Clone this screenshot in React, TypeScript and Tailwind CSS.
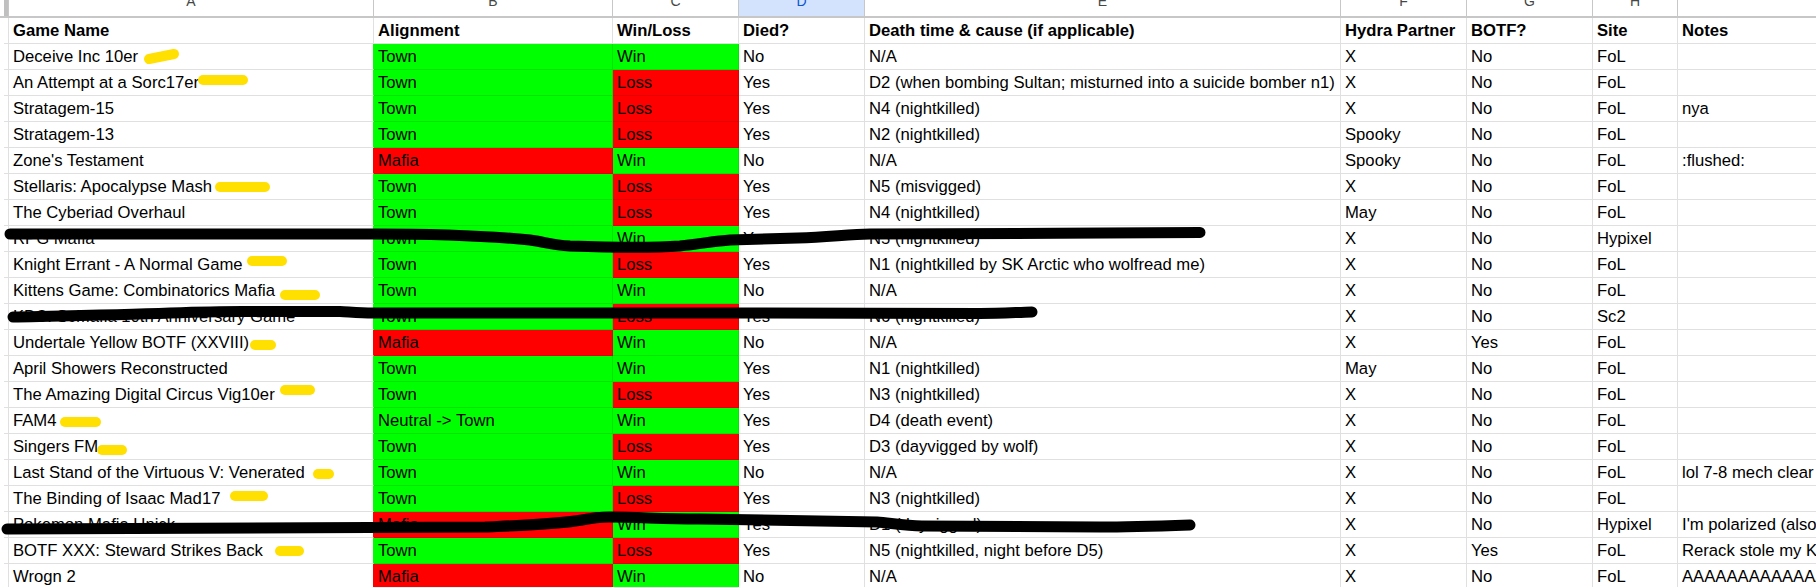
const COLS = ["A", "B", "C", "D", "E", "F", "G", "H", ""];

const HEAD = ["Game Name", "Alignment", "Win/Loss", "Died?", "Death time & cause (if applicable)", "Hydra Partner", "BOTF?", "Site", "Notes"];

const ROWS: string[][] = [
  ["Deceive Inc 10er", "Town", "Win", "No", "N/A", "X", "No", "FoL", ""],
  ["An Attempt at a Sorc17er", "Town", "Loss", "Yes", "D2 (when bombing Sultan; misturned into a suicide bomber n1)", "X", "No", "FoL", ""],
  ["Stratagem-15", "Town", "Loss", "Yes", "N4 (nightkilled)", "X", "No", "FoL", "nya"],
  ["Stratagem-13", "Town", "Loss", "Yes", "N2 (nightkilled)", "Spooky", "No", "FoL", ""],
  ["Zone's Testament", "Mafia", "Win", "No", "N/A", "Spooky", "No", "FoL", ":flushed:"],
  ["Stellaris: Apocalypse Mash", "Town", "Loss", "Yes", "N5 (misvigged)", "X", "No", "FoL", ""],
  ["The Cyberiad Overhaul", "Town", "Loss", "Yes", "N4 (nightkilled)", "May", "No", "FoL", ""],
  ["RPG Mafia", "Town", "Win", "Yes", "N5 (nightkilled)", "X", "No", "Hypixel", ""],
  ["Knight Errant - A Normal Game", "Town", "Loss", "Yes", "N1 (nightkilled by SK Arctic who wolfread me)", "X", "No", "FoL", ""],
  ["Kittens Game: Combinatorics Mafia", "Town", "Win", "No", "N/A", "X", "No", "FoL", ""],
  ["KBC: ScMafia 10th Anniversary Game", "Town", "Loss", "Yes", "N6 (nightkilled)", "X", "No", "Sc2", ""],
  ["Undertale Yellow BOTF (XXVIII)", "Mafia", "Win", "No", "N/A", "X", "Yes", "FoL", ""],
  ["April Showers Reconstructed", "Town", "Win", "Yes", "N1 (nightkilled)", "May", "No", "FoL", ""],
  ["The Amazing Digital Circus Vig10er", "Town", "Loss", "Yes", "N3 (nightkilled)", "X", "No", "FoL", ""],
  ["FAM4", "Neutral -> Town", "Win", "Yes", "D4 (death event)", "X", "No", "FoL", ""],
  ["Singers FM", "Town", "Loss", "Yes", "D3 (dayvigged by wolf)", "X", "No", "FoL", ""],
  ["Last Stand of the Virtuous V: Venerated", "Town", "Win", "No", "N/A", "X", "No", "FoL", "lol 7-8 mech clear"],
  ["The Binding of Isaac Mad17", "Town", "Loss", "Yes", "N3 (nightkilled)", "X", "No", "FoL", ""],
  ["Pokemon Mafia Unick", "Mafia", "Win", "Yes", "D1 (dayvigged)", "X", "No", "Hypixel", "I'm polarized (also known as a very long note)"],
  ["BOTF XXX: Steward Strikes Back", "Town", "Loss", "Yes", "N5 (nightkilled, night before D5)", "X", "Yes", "FoL", "Rerack stole my Kill and everything else too"],
  ["Wrogn 2", "Mafia", "Win", "No", "N/A", "X", "No", "FoL", "AAAAAAAAAAAAAAAAAAAAAAAAAAAAAAAA"],
];

const YELLOW: [number, number, number, number][] = [
  [149, 59, 174, 54],
  [203, 80, 243, 80],
  [220, 187, 265, 187],
  [252, 261, 282, 261],
  [285, 295, 315, 295],
  [255, 345, 271, 345],
  [285, 390, 310, 390],
  [65, 422, 96, 422],
  [102, 450, 122, 450],
  [318, 474, 329, 474],
  [235, 496, 263, 496],
  [280, 551, 299, 551],
];

const BLACK = [
  "M10 234 L373 234 C420 234 480 235 530 240 C545 242 552 245 570 246 C600 247 650 248 680 246 C700 244 715 241 730 240 L798 238 C830 237 850 234 870 234 C950 234 1100 233 1200 232.5",
  "M13 317 C60 316 120 315 170 313 C200 312 220 311.5 242 311.5 L340 311.5 C350 312 360 313 373 313 L760 313 L980 313.5 C1000 313.5 1015 312.5 1032 312",
  "M7 529 L485 527 C530 525 560 524 582 520 C592 518 600 517 609 517 C640 517 660 519 699 519 L877 522 C890 523 905 526 922 526 L1100 527 C1130 527 1160 526 1190 525",
];

function colorOf(value: string): string {
  if (value === "Town" || value === "Win" || value === "Neutral -> Town") return "bg-[#00ff00] border-black/10";
  if (value === "Mafia" || value === "Loss") return "bg-[#ff0000] border-black/10";
  return "border-[#e0e0e0]";
}

function Cell({ text, className = "" }: { text: string; className?: string }) {
  return (
    <div className={`flex items-end overflow-hidden whitespace-nowrap border-r border-b pl-1 pb-[3px] text-[16.67px] leading-[18px] text-black ${className}`}>
      {text}
    </div>
  );
}

export default function App() {
  return (
    <div className="relative h-[587px] w-[1816px] overflow-hidden bg-white font-['Liberation_Sans',Arial,sans-serif]">
      <div className="grid grid-cols-[9px_365px_239px_126px_126px_476px_126px_126px_85px_138px] grid-rows-[18px] auto-rows-[26px]">
        <div className="border-r border-b-2 border-[#c7c7c7] pl-1">
          <div className="h-full bg-[#c0c0c0]" />
        </div>
        {COLS.map((c, i) => (
          <div
            key={i}
            className={`flex items-end justify-center overflow-hidden border-b-2 border-[#c7c7c7] pb-[8px] text-[14px] leading-[14px] ${i < 8 ? "border-r" : ""} ${c === "D" ? "bg-[#d3e3fd] text-[#0b57d0]" : "text-[#444746]"}`}
          >
            {c}
          </div>
        ))}

        <div className="border-r border-[#e0e0e0] pl-1">
          <div className="h-full border-b border-[#e0e0e0]" />
        </div>
        {HEAD.map((h, i) => (
          <Cell key={i} text={h} className={`border-[#e0e0e0] font-bold ${i === 8 ? "border-r-0" : ""}`} />
        ))}

        {ROWS.map((row, r) => (
          <div key={r} className="contents">
            <div className="border-r border-[#e0e0e0] pl-1">
              <div className="h-full border-b border-[#e0e0e0]" />
            </div>
            {row.map((v, i) => {
              const colored = i === 1 || i === 2;
              const nextToColor = i === 0;
              const rightEdge = nextToColor ? (row[1] === "Mafia" ? "border-r-[#ff0000]" : "border-r-[#00ff00]") : "";
              return (
                <Cell
                  key={i}
                  text={v}
                  className={`${colored ? colorOf(v) : "border-[#e0e0e0]"} ${rightEdge} ${i === 8 ? "border-r-0" : ""}`}
                />
              );
            })}
          </div>
        ))}
      </div>

      <svg className="absolute top-0 left-0" width="1816" height="587" viewBox="0 0 1816 587" fill="none">
        {YELLOW.map(([x1, y1, x2, y2], i) => (
          <line key={i} x1={x1} y1={y1} x2={x2} y2={y2} stroke="#ffe000" strokeWidth="10" strokeLinecap="round" />
        ))}
        {BLACK.map((d, i) => (
          <path key={i} d={d} stroke="#000000" strokeWidth="11" strokeLinecap="round" strokeLinejoin="round" />
        ))}
      </svg>
    </div>
  );
}
